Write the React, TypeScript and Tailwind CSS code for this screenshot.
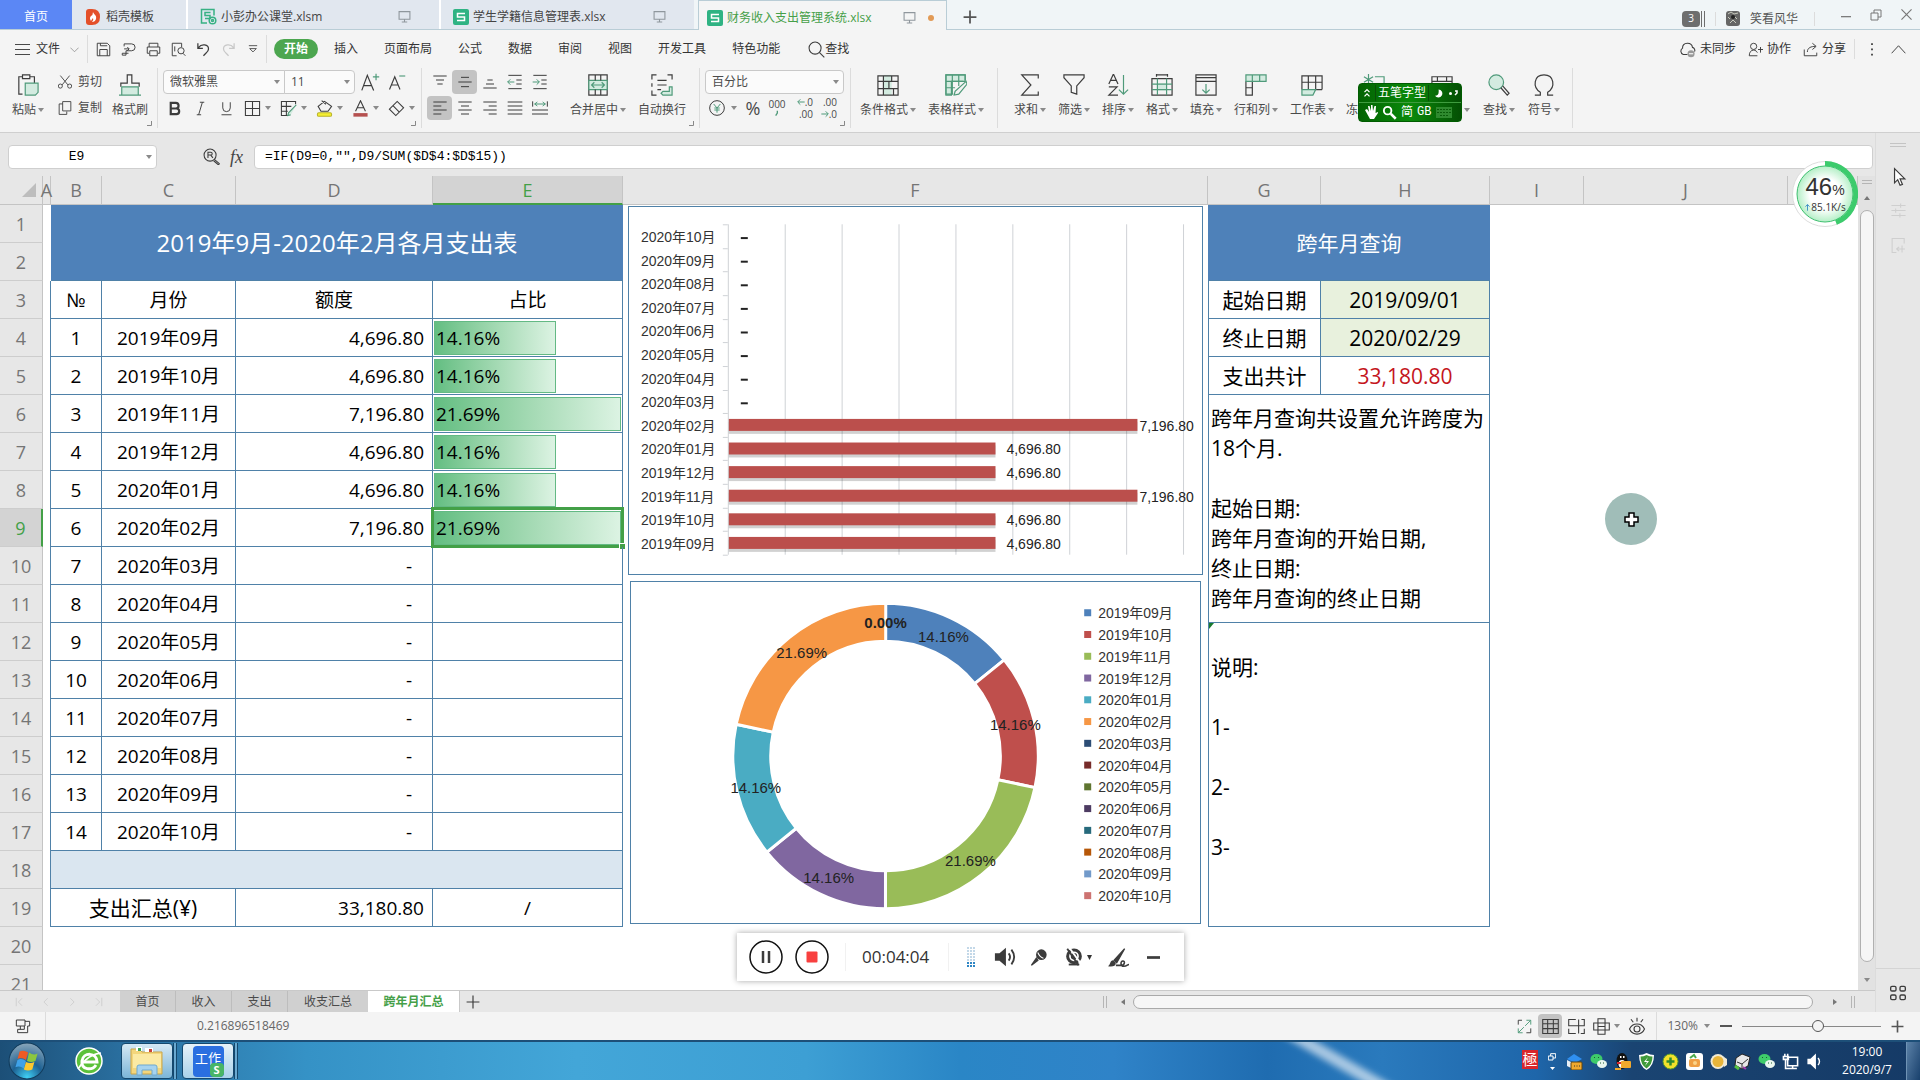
import type { ReactNode } from 'react';

const G = '#4f9a7a';
const K = '#3c3c3c';
const MINT = '#d3ebe0';

function Svg({ w = 16, box = 24, sw = 1.5, children, className = '' }: { w?: number; box?: number; sw?: number; children: ReactNode; className?: string }) {
    return (
        <svg width={w} height={w} viewBox={`0 0 ${box} ${box}`} fill="none" stroke={K} strokeWidth={sw} aria-hidden="true" className={`shrink-0 ${className}`}>
            {children}
        </svg>
    );
}

function Caret() {
    return (
        <svg width="6" height="4" viewBox="0 0 6 4" className="shrink-0" aria-hidden="true">
            <path d="M0 0h6L3 4z" fill="#8a8a8a" />
        </svg>
    );
}

function Sep({ className = '' }: { className?: string }) {
    return <span className={`w-px shrink-0 bg-[#dcdcdc] ${className}`} />;
}

function Monitor() {
    return (
        <Svg w={13} sw={2}>
            <path d="M2 3h20v14H2zM12 17v5M7 22h10" stroke="#8f979d" />
        </Svg>
    );
}

function SheetLogo({ plain = false }: { plain?: boolean }) {
    if (plain) {
        return (
            <svg width="17" height="17" viewBox="0 0 17 17" fill="none" stroke="#37b184" strokeWidth="1.5" className="shrink-0" aria-hidden="true">
                <path d="M7 15H1.5V1.500H14v6" />
                <path d="M10.500 4.500H5v3h5v3H5" />
                <circle cx="12.500" cy="12.500" r="3.300" />
                <circle cx="12.500" cy="12.500" r="1" />
            </svg>
        );
    }
    return (
        <svg width="16" height="16" viewBox="0 0 16 16" fill="none" className="shrink-0" aria-hidden="true">
            <rect width="16" height="16" rx="2" fill="#2fb383" />
            <path d="M12 4.500H4.500V8h7v3.500H4" stroke="#fff" strokeWidth="1.500" />
        </svg>
    );
}

function TitleBar() {
    return (
        <header className="flex h-[30px] shrink-0 items-stretch border-b border-[#b9cdd6] bg-[#f0f5f7] text-xs text-[#444]">
            <a href="#home" className="flex w-[72px] items-center justify-center bg-[#5b87f5] pt-1 text-white">首页</a>
            <a href="#docer" className="flex w-[116px] items-center gap-1.5 border-r-2 border-white bg-[#e1e7ef] pl-3.5 pt-1">
                <svg width="14" height="16" viewBox="0 0 14 16" aria-hidden="true">
                    <path d="M0 3Q0 0 3 0H6Q14 0 14 8T6 16H3Q0 16 0 13z" fill="#e4502a" />
                    <path d="M7 3c1 3 4 3 3 7q-1 3-4 3 2-2 1-4-1 1-2 3-2-3 0-5 2-1 2-4z" fill="#fff" />
                </svg>
                稻壳模板
            </a>
            <a href="#class" className="flex w-[253px] items-center gap-1 border-r-2 border-white bg-[#e1e7ef] pl-3 pt-1">
                <SheetLogo plain />
                <span className="flex-1">小彭办公课堂.xlsm</span>
                <span className="mr-7"><Monitor /></span>
            </a>
            <a href="#students" className="flex w-[253px] items-center gap-1 bg-[#e1e7ef] pl-3 pt-1">
                <SheetLogo />
                <span className="flex-1">学生学籍信息管理表.xlsx</span>
                <span className="mr-7"><Monitor /></span>
            </a>
            <a href="#finance" className="-mb-px ml-1 flex w-[249px] items-center gap-1 border-x border-t border-[#b9cdd6] bg-[#f4f5f5] pl-2 pt-1 text-[#46a049]">
                <SheetLogo />
                <span className="flex-1">财务收入支出管理系统.xlsx</span>
                <Monitor />
                <span className="ml-2 mr-3 size-1.5 rounded-full bg-[#e29a55]" />
            </a>
            <button aria-label="新建" className="w-[46px] pt-1">
                <Svg w={14} sw={3} className="mx-auto"><path d="M12 1v22M1 12h22" stroke="#555" /></Svg>
            </button>
            <div className="ml-auto flex items-center pt-2 text-[#555]">
                <span className="flex h-4 w-[18px] items-center justify-center rounded-sm bg-[#6e6e6e] text-[10px] text-white">3</span>
                <span className="ml-px h-4 w-1 border-x border-[#6e6e6e]" />
                <Sep className="mx-2.5 h-3.5" />
                <svg width="14" height="15" viewBox="0 0 14 15" aria-hidden="true">
                    <rect width="14" height="15" rx="3" fill="#666" />
                    <path d="M2 3l3-2 3 2 4-1M2 6l2 2M9 6l2 2M4 12l3-3 3 3" stroke="#c9cbbf" fill="none" />
                    <circle cx="7" cy="6" r="2" fill="#222" />
                </svg>
                <span className="ml-2.5">笑看风华</span>
                <Sep className="ml-4 h-3.5" />
                <div className="-mt-2 flex">
                    <button aria-label="最小化" className="flex h-5 w-9 items-center justify-end"><Svg w={10}><path d="M0 16h24" stroke="#777" strokeWidth="3" /></Svg></button>
                    <button aria-label="还原" className="flex h-5 w-[31px] items-center justify-end"><Svg w={12} sw={2}><path d="M2 8h14v14H2zM8 8V2h14v14h-6" stroke="#777" /></Svg></button>
                    <button aria-label="关闭" className="mr-2 flex h-5 w-[30px] items-center justify-end"><Svg w={11} sw={2.5}><path d="M1 1l22 22M23 1L1 23" stroke="#777" /></Svg></button>
                </div>
            </div>
        </header>
    );
}

const menus = ['插入', '页面布局', '公式', '数据', '审阅', '视图', '开发工具', '特色功能'];

const quick: { label: string; art: ReactNode }[] = [
    { label: '保存', art: <path d="M2 2h16l4 4v16H2zM6 22v-10h12v10M7 2v4h11" /> },
    { label: '输出', art: <path d="M5 7V3h12a5 5 0 010 11H8v7H2v-3h10M5 11h8M10 8l3 3-3 3" /> },
    { label: '打印', art: <path d="M5 8V2h14v6M5 18H2V8h20v10h-3M6 14h12v8H6z" /> },
    { label: '预览', art: <path d="M9 22H2V2h15v6M16 19a5 5 0 100-10 5 5 0 000 10zM19 18l4 4M6 7v8" /> },
];

function MenuBar() {
    return (
        <nav className="flex h-9 shrink-0 items-center bg-[#f4f4f4] pl-[15px] pt-0.5 text-xs text-[#333]">
            <button className="flex items-center gap-1.5">
                <Svg w={15}><path d="M0 4h24M0 12h24M0 20h24" /></Svg>
                文件
                <Svg w={9} className="ml-1" sw={2}><path d="M1 7l11 11L23 7" stroke="#888" /></Svg>
            </button>
            <Sep className="mx-2 h-7" />
            <div className="flex items-center gap-2.5">
                {quick.map((q) => (
                    <button key={q.label} aria-label={q.label}><Svg w={15}>{q.art}</Svg></button>
                ))}
                <button aria-label="撤销"><Svg w={15} sw={2}><path d="M3 2v8h8M4 9c5-7 16-5 16 2 0 5-5 7-8 11" /></Svg></button>
                <button aria-label="恢复"><Svg w={15} sw={2}><path d="M21 2v8h-8M20 9C15 2 4 4 4 11c0 5 5 7 8 11" stroke="#c8c8c8" /></Svg></button>
                <button aria-label="更多" className="ml-0.5"><Svg w={10} sw={2}><path d="M2 4h20M4 11h16l-8 8z" /></Svg></button>
            </div>
            <Sep className="ml-2 h-7" />
            <button className="ml-[7px] h-5 w-11 rounded-full bg-[#4ca64f] font-bold leading-5 text-white">开始</button>
            <div className="ml-4 flex gap-[26px]">
                {menus.map((m) => <button key={m}>{m}</button>)}
            </div>
            <button className="ml-7 flex items-center">
                <Svg w={17}><circle cx="10" cy="10" r="8.500" /><path d="M16 16l7 7" /></Svg>
                查找
            </button>
            <div className="ml-auto flex items-center gap-3 pr-3.5">
                <button className="flex items-center gap-1">
                    <Svg w={17}><path d="M12 19H6a5 5 0 01-1-9c0-9 13-9 14-1 3 1 4 4 3 6" /><circle cx="17" cy="18" r="5" fill="#999" stroke="none" /><path d="M14 18h6" stroke="#fff" /></Svg>
                    未同步
                </button>
                <button className="flex items-center gap-1">
                    <Svg w={15}><circle cx="9" cy="7" r="5" /><path d="M2 22c0-6 3-9 7-9 3 0 5 2 6 4M2 22h13M20 8v9M16 12h8" /></Svg>
                    协作
                </button>
                <button className="flex items-center gap-1">
                    <Svg w={15}><path d="M2 12v10h20v-5M7 16c0-7 6-9 13-9M15 2l6 5-6 5" /></Svg>
                    分享
                </button>
                <Sep className="-ml-1 h-5" />
                <button aria-label="选项" className="w-2"><Svg w={14} className="-ml-0.5"><path d="M12 2v3M12 11v3M12 20v3" strokeWidth="3" /></Svg></button>
                <button aria-label="折叠功能区" className="ml-1"><Svg w={15}><path d="M1 18L12 6l11 12" /></Svg></button>
            </div>
        </nav>
    );
}

function Big({ label, width = 'w-11', caret = true, children }: { label: string; width?: string; caret?: boolean; children: ReactNode }) {
    return (
        <button className={`flex shrink-0 flex-col items-center gap-1.5 pt-2 ${width}`}>
            <Svg w={22} sw={1.3}>{children}</Svg>
            <span className="flex items-center gap-0.5 whitespace-nowrap leading-4">{label}{caret && <Caret />}</span>
        </button>
    );
}

function Corner() {
    return <svg width="5" height="5" viewBox="0 0 5 5" className="absolute bottom-1.5 right-[5px]" aria-hidden="true"><path d="M4.500 0v4.500H0" fill="none" stroke="#888" /></svg>;
}

function Tool({ label, on = false, children }: { label: string; on?: boolean; children: ReactNode }) {
    return (
        <button aria-label={label} className={`flex h-6 w-[25px] items-center justify-center rounded ${on ? 'bg-[#c3c3c3]' : ''}`}>
            <Svg w={16}>{children}</Svg>
        </button>
    );
}

function DropTool({ label, children }: { label: string; children: ReactNode }) {
    return (
        <button aria-label={label} className="flex h-6 w-9 items-center justify-center gap-1">
            <Svg w={17}>{children}</Svg>
            <Caret />
        </button>
    );
}

function Pick({ label, value, className }: { label: string; value: string; className: string }) {
    return (
        <label className={`relative flex h-6 items-center border border-[#c9c9c9] bg-[#fbfbfb] ${className}`}>
            <select aria-label={label} className="h-full w-full appearance-none pl-1.5 text-xs outline-none">
                <option>{value}</option>
            </select>
            <span className="pointer-events-none absolute inset-y-0 right-1 flex items-center"><Caret /></span>
        </label>
    );
}

function Ribbon() {
    return (
        <section className="flex h-[67px] shrink-0 overflow-hidden border-b border-[#cfcfcf] bg-[#f4f4f4] text-xs text-[#4a4a4a]">
            <div className="relative flex w-[157px] shrink-0 pl-1.5">
                <Big label="粘贴">
                    <path d="M6 22H2V3h4M14 3h5v7M6 1h8v4H6z" />
                    <path d="M9 10h14v10l-3 3H9z" fill={MINT} stroke={G} />
                </Big>
                <div className="ml-2 flex shrink-0 flex-col gap-0.5 whitespace-nowrap pt-1">
                    <button className="flex h-6 items-center gap-1.5">
                        <Svg w={14}><path d="M4 1l13 16M20 1L7 17" /><circle cx="4" cy="19" r="3.500" /><circle cx="20" cy="19" r="3.500" /></Svg>剪切
                    </button>
                    <button className="flex h-6 items-center gap-1.5">
                        <Svg w={14}><path d="M8 1h14v16H8zM8 5H2v18h13v-5" /></Svg>复制
                    </button>
                </div>
                <Big label="格式刷" width="w-14" caret={false}>
                    <path d="M2 14v-4h7V1h5v9h8v4" />
                    <path d="M3 14h18v9H3zM0 23h24" fill={MINT} stroke={G} />
                </Big>
                <Corner />
            </div>
            <Sep className="mb-1 mt-0.5" />
            <div className="relative flex w-[263px] shrink-0 flex-col gap-0.5 pl-[3px] pt-1">
                <div className="flex items-center pl-0.5">
                    <Pick label="字体" value="微软雅黑" className="w-[122px] rounded-l" />
                    <Pick label="字号" value="11" className="-ml-px w-[71px] rounded-r" />
                    <button aria-label="增大字号" className="ml-1.5"><Svg w={19}><path d="M1 22L8 3l8 19M3 16h10" /><path d="M19 1v8M15 5h8" stroke={G} /></Svg></button>
                    <button aria-label="减小字号" className="ml-2"><Svg w={18}><path d="M2 22L9 5l7 17M4 16h9" /><path d="M15 4h8" stroke={G} /></Svg></button>
                </div>
                <div className="flex items-center">
                    <button aria-label="加粗" className="h-6 w-[26px]"><Svg w={15} className="mx-auto" sw={3.5}><path d="M6 3h8a4 4 0 010 9H6zM6 12h9a4 4 0 010 9H6z" /></Svg></button>
                    <button aria-label="倾斜" className="h-6 w-[26px]"><Svg w={15} className="mx-auto"><path d="M11 2h7M6 22h7M15 2L9 22" /></Svg></button>
                    <button aria-label="下划线" className="h-6 w-[26px]"><Svg w={15} className="mx-auto"><path d="M6 2v9a6 6 0 0012 0V2M4 22h16" /></Svg></button>
                    <DropTool label="边框"><path d="M2 2h20v20H2zM12 2v20M2 12h20" /></DropTool>
                    <DropTool label="绘图边框"><path d="M22 6V2H2v20h10M2 9h14M2 16h9M9 2v20" /><path d="M23 7L12 18l-1 4 4-1" fill={MINT} stroke={G} /></DropTool>
                    <DropTool label="填充颜色"><path d="M12 2L3 9l4 7h10l5-7zM8 1l6 5" /><rect x="2" y="18" width="20" height="5" rx="2" fill="#f5ee31" stroke="#b9b32e" /></DropTool>
                    <DropTool label="字体颜色"><path d="M5 16L12 1l7 15M8 11h8" /><path d="M2 21h20" stroke="#b5504f" strokeWidth="5" /></DropTool>
                    <DropTool label="清除"><path d="M2 13L13 2l9 9-11 11zM7 8l9 9" /></DropTool>
                </div>
                <Corner />
            </div>
            <Sep className="mb-1 mt-0.5" />
            <div className="relative flex w-[277px] shrink-0 pl-[5px]">
                <div className="flex flex-col gap-0.5 pt-1">
                    <div className="flex">
                        <Tool label="顶端对齐"><path d="M2 3h20M6 9h12M8 15h8" /></Tool>
                        <Tool label="垂直居中" on><path d="M6 5h12M2 12h20M6 19h12" /></Tool>
                        <Tool label="底端对齐"><path d="M8 9h8M6 15h12M2 21h20" /></Tool>
                        <Tool label="减少缩进"><path d="M2 2h20M14 9h8M14 15h8M2 22h20" /><path d="M11 12H1M5 8l-4 4 4 4" stroke={G} /></Tool>
                        <Tool label="增加缩进"><path d="M2 2h20M14 9h8M14 15h8M2 22h20" /><path d="M1 12h10M7 8l4 4-4 4" stroke={G} /></Tool>
                    </div>
                    <div className="flex">
                        <Tool label="左对齐" on><path d="M2 3h20M2 9h12M2 15h20M2 21h12" /></Tool>
                        <Tool label="居中"><path d="M2 3h20M6 9h12M2 15h20M6 21h12" /></Tool>
                        <Tool label="右对齐"><path d="M2 3h20M10 9h12M2 15h20M10 21h12" /></Tool>
                        <Tool label="两端对齐"><path d="M1 3h22M1 9h22M1 15h22M1 21h22" /></Tool>
                        <Tool label="分散对齐"><path d="M1 2v8M23 2v8M0 15h24M0 21h24" /><path d="M4 6h16M8 3L4 6l4 3M16 3l4 3-4 3" stroke={G} /></Tool>
                    </div>
                </div>
                <span className="w-3" />
                <Big label="合并居中" width="w-[68px]">
                    <path d="M2 1h20v22H2z" />
                    <path d="M2 7h20v10H2z" fill={MINT} stroke={G} />
                    <path d="M9 1v6M15 1v6M9 17v6M15 17v6" />
                    <path d="M5 12h14M8 9l-3 3 3 3M16 9l3 3-3 3" stroke={G} />
                </Big>
                <Big label="自动换行" width="w-[60px]" caret={false}>
                    <path d="M6 1H1v5M18 1h5v5M1 18v5h5M1 10v4M7 7h10M7 12h10M7 17h4" />
                    <path d="M20 14v5h-7l-2 2 2 2h10v-9z" fill={MINT} stroke={G} />
                </Big>
                <Corner />
            </div>
            <Sep className="mb-1 mt-0.5" />
            <div className="relative flex w-[150px] shrink-0 flex-col gap-0.5 pl-[5px] pt-1">
                <Pick label="数字格式" value="百分比" className="w-[139px] rounded" />
                <div className="flex h-6 items-center">
                    <button aria-label="货币" className="ml-1 flex w-8 items-center gap-1.5"><Svg w={16}><circle cx="12" cy="12" r="11" /><path d="M7 6l5 6 5-6M12 12v7M8 12h8M8 15h8" stroke={G} /></Svg><Caret /></button>
                    <button className="w-6 text-lg leading-6">%</button>
                    <button className="flex w-6 flex-col items-center text-[10px] leading-3">000<Svg w={8}><path d="M13 2v7l-5 8" stroke={G} strokeWidth="4" /></Svg></button>
                    <button aria-label="增加小数位数" className="ml-0.5 flex w-6 flex-col items-end pr-0.5 text-[10px] leading-3"><span className="flex items-center"><Svg w={8} sw={3}><path d="M23 12H3M10 4l-8 8 8 8" stroke={G} /></Svg>.0</span><span>.00</span></button>
                    <button aria-label="减少小数位数" className="flex w-6 flex-col items-end pr-0.5 text-[10px] leading-3"><span>.00</span><span className="flex items-center"><Svg w={8} sw={3}><path d="M1 12h20M14 4l8 8-8 8" stroke={G} /></Svg>.0</span></button>
                </div>
                <Corner />
            </div>
            <Sep className="mb-1 mt-0.5" />
            <div className="flex w-[146px] shrink-0 pl-[3px]">
                <Big label="条件格式" width="w-[68px]">
                    <path d="M7 1h9v22H7z" fill={MINT} stroke="none" />
                    <path d="M1 2h22v21H1zM1 8h22M1 16h22M7 2v21M16 2v6M13 8v8M18 16v7" />
                </Big>
                <Big label="表格样式" width="w-[68px]">
                    <path d="M1 1h21v7H7v15H1z" fill={MINT} stroke={G} />
                    <path d="M22 7V1H1v21h8M1 8h19M1 15h10M8 1v21M15 1v12" stroke={G} />
                    <path d="M23 8L11 19l-1 4 5-1L24 11z" fill="#f4f4f4" stroke={G} />
                </Big>
            </div>
            <Sep className="mb-1 mt-0.5" />
            <div className="flex shrink-0 pl-2.5 pr-1.5">
                <Big label="求和"><path d="M21 5V1H3l10 11L3 23h18v-4" /></Big>
                <Big label="筛选"><path d="M1 1h22v3l-8 9v9l-6-2v-7L1 4z" /></Big>
                <Big label="排序"><path d="M2 11L7 0l5 11M4 7h6M2 14h9L2 23h10" /><path d="M18 1v21M13 17l5 5 5-5" stroke={G} /></Big>
                <Big label="格式"><path d="M7 10h10v8H7z" fill={MINT} stroke="none" /><path d="M6 1h12M6 0v3M18 0v3M1 5h22v18H1z" /><path d="M7 5v18M17 5v18M1 11h22M1 17h22" stroke={G} /></Big>
                <Big label="填充"><path d="M1 1h22v22H1zM1 4h22M1 8h22" /><path d="M12 11v10M8 17l4 4 4-4" stroke={G} /></Big>
                <Big label="行和列" width="w-14"><path d="M8 8v15H1V8M1 15h7" /><path d="M1 1h22v7H1zM8 1v7M16 1v7" fill={MINT} stroke={G} /></Big>
                <Big label="工作表" width="w-14"><path d="M23 17V2H1v15M1 9h22M8 2v15M16 2v15h7" /><path d="M1 17h15l-3 6H1z" fill={MINT} stroke={G} /></Big>
                <Big label="冻结窗格" width="w-[68px]"><path d="M6 0v12M1 3l10 6M11 3L1 9" stroke={G} /><path d="M13 3h10v19H2v-8M13 12h10" stroke={G} /></Big>
                <Big label="表格工具" width="w-[68px]"><path d="M1 3h22v19H1zM1 8h22M7 3v5M17 3v5" /></Big>
                <Big label="查找" width="w-[46px]"><circle cx="9" cy="9" r="8" fill={MINT} stroke={G} /><path d="M14 15l7 8 2-2-7-8" /></Big>
                <Big label="符号"><path d="M2 23h6v-3C-1 14 1 1 12 1s13 13 4 19v3h6" /></Big>
            </div>
            <Sep className="mb-1 mt-0.5" />
        </section>
    );
}

function ImeBar() {
    return (
        <div className="absolute left-[1358px] top-[83px] h-[39px] w-[104px] rounded border border-[#005c00] bg-gradient-to-r from-[#036303] via-[#0b8a0b] to-[#045004] text-xs text-white">
            <div className="flex h-[19px] items-center border-b border-[#3f9c3f]">
                <Svg w={10} className="mx-[3px]" sw={3}><path d="M6 10l6-6 6 6M6 20l6-6 6 6" stroke="#fff" /></Svg>
                <span className="border-x border-[#0a4f0a] px-0.5">五笔字型</span>
                <svg width="8" height="9" viewBox="0 0 9 9" className="ml-1.5" aria-hidden="true"><path d="M4 0a4.500 4.500 0 11-4 7q5 0 4-7z" fill="#fff" /></svg>
                <span className="ml-1.5 size-[3px] rounded-full bg-white" />
                <svg width="4" height="6" viewBox="0 0 4 6" className="ml-0.5" aria-hidden="true"><path d="M1 1h2v2L1 5" fill="none" stroke="#fff" strokeWidth="1.500" /></svg>
            </div>
            <div className="flex h-[18px] items-center gap-1 pl-1.5">
                <svg width="13" height="14" viewBox="0 0 13 14" fill="#fff" aria-hidden="true"><path d="M0 5l2-1 2 3L3 1h1.500L6 6V0h1.500l.5 6 1.500-5H11l-.5 7L13 7v1l-4 6H5z" /></svg>
                <Svg w={15} sw={3}><circle cx="9" cy="9" r="6" stroke="#fff" /><path d="M14 14l8 8" stroke="#fff" strokeWidth="4" /></Svg>
                <span>简</span>
                <span className="font-['Liberation_Mono',monospace] text-xs">GB</span>
                <svg width="16" height="11" viewBox="0 0 16 11" className="ml-px" aria-hidden="true"><rect width="16" height="11" fill="#2f8a2f" /><path d="M1 2.500h14M1 5.500h14M4 8.500h8" stroke="#0a5c0a" strokeDasharray="2 1" /></svg>
            </div>
        </div>
    );
}

function FormulaBar() {
    return (
        <div className="flex h-[43px] shrink-0 items-center bg-[#e7e7e7] pl-2 pr-0.5 pt-1 text-black">
            <label className="relative flex h-6 w-[149px] items-center rounded border border-[#cfcfcf] bg-white">
                <input aria-label="名称框" defaultValue="E9" className="w-full pr-3 text-center font-['Liberation_Mono',monospace] text-[13px] outline-none" />
                <span className="pointer-events-none absolute inset-y-0 right-1 flex items-center"><Caret /></span>
            </label>
            <Svg w={17} className="ml-[46px]"><circle cx="10" cy="10" r="8.500" /><path d="M16 16l7 6-1 2-7-6M7 14V6h4a2 2 0 010 4H7M11 10l3 4" /></Svg>
            <i className="ml-2.5 w-6 font-['Liberation_Serif',serif] text-lg text-[#444]">fx</i>
            <input aria-label="编辑栏" defaultValue={'=IF(D9=0,"",D9/SUM($D$4:$D$15))'} className="h-6 min-w-0 flex-1 rounded border border-[#cfcfcf] bg-white pl-2.5 font-['Liberation_Mono',monospace] text-[13px] outline-none" />
        </div>
    );
}

const months = [
    { month: '2019年09月', amount: 4696.8, share: 14.16, color: '#4e81bb' },
    { month: '2019年10月', amount: 4696.8, share: 14.16, color: '#bf4f4c' },
    { month: '2019年11月', amount: 7196.8, share: 21.69, color: '#99bc58' },
    { month: '2019年12月', amount: 4696.8, share: 14.16, color: '#8067a0' },
    { month: '2020年01月', amount: 4696.8, share: 14.16, color: '#4aacc3' },
    { month: '2020年02月', amount: 7196.8, share: 21.69, color: '#f69745' },
    { month: '2020年03月', amount: 0, share: 0, color: '#2c4d75' },
    { month: '2020年04月', amount: 0, share: 0, color: '#772c2a' },
    { month: '2020年05月', amount: 0, share: 0, color: '#5f7530' },
    { month: '2020年06月', amount: 0, share: 0, color: '#4d3b62' },
    { month: '2020年07月', amount: 0, share: 0, color: '#276a7c' },
    { month: '2020年08月', amount: 0, share: 0, color: '#b65708' },
    { month: '2020年09月', amount: 0, share: 0, color: '#729aca' },
    { month: '2020年10月', amount: 0, share: 0, color: '#cd7371' },
];

const money = (n: number) => n.toLocaleString('en-US', { minimumFractionDigits: 2 });

function BarChart() {
    const step = 331 / 14;
    return (
        <svg viewBox="0 0 574 367" className="block h-[367px] w-full" fontSize="14" fill="#333">
            <g stroke="#cfd2d6">
                {[0, 1, 2, 3, 4, 5, 6, 7, 8].map((i) => <path key={i} d={`M${99.5 + i * 57} 17v331`} />)}
                {Array.from({ length: 15 }, (_, i) => <path key={i} d={`M94 ${Math.round(17 + i * step) + 0.5}h5`} />)}
            </g>
            {[...months].reverse().map((m, i) => {
                const y = 17 + (i + 0.5) * step;
                const len = (m.amount / 8000) * 455;
                return (
                    <g key={m.month}>
                        <text x="12" y={y + 6}>{m.month}</text>
                        {m.amount > 0 ? (
                            <>
                                <rect x="100" y={y - 3} width={len} height="12" fill="#000" opacity="0.180" />
                                <rect x="100" y={y - 6} width={len} height="12" fill="#bb4f4c" />
                                <text x={100 + len + (m.amount > 7000 ? 2 : 11)} y={y + 6} fill="#222">{money(m.amount)}</text>
                            </>
                        ) : (
                            <path d={`M112 ${y + 2}h7`} stroke="#222" strokeWidth="2" />
                        )}
                    </g>
                );
            })}
        </svg>
    );
}

function point(r: number, t: number) {
    const a = t * Math.PI * 2;
    return `${(255 + r * Math.sin(a)).toFixed(2)} ${(174 - r * Math.cos(a)).toFixed(2)}`;
}

function RingChart() {
    let from = 0;
    const slices = months.filter((m) => m.share > 0).map((m) => {
        const start = from;
        from += m.share / 100;
        return { ...m, start, end: from };
    });
    const tags: [number, number][] = [[313, 55], [385, 143], [340, 279], [198, 296], [125, 206], [171, 71]];
    return (
        <svg viewBox="0 0 570 341" className="block h-[341px] w-full" fontSize="15" fill="#222">
            {slices.map((s) => (
                <path
                    key={s.month}
                    d={`M${point(153, s.start)}A153 153 0 0 1 ${point(153, s.end)}L${point(115, s.end)}A115 115 0 0 0 ${point(115, s.start)}Z`}
                    fill={s.color}
                    stroke="#fff"
                    strokeWidth="3"
                />
            ))}
            {slices.map((s, i) => (
                <text key={s.month} x={tags[i][0]} y={tags[i][1] + 5} textAnchor="middle">{s.share.toFixed(2)}%</text>
            ))}
            <text x="255" y="46" textAnchor="middle" fontWeight="bold">0.00%</text>
            <g fontSize="14" fill="#333">
                {months.map((m, i) => (
                    <g key={m.month}>
                        <rect x="454" y={27 + i * 21.8} width="7" height="7" fill={m.color} />
                        <text x="468" y={36 + i * 21.8}>{m.month}</text>
                    </g>
                ))}
            </g>
        </svg>
    );
}

const LINE = 'border-[#4f81a8]';

function MonthCells({ i }: { i: number }) {
    const m = months[i];
    return (
        <>
            <td className={`border-b border-r text-center ${LINE}`}>{i + 1}</td>
            <td className={`border-b border-r text-center ${LINE}`}>{m.month}</td>
            <td className={`border-b border-r text-right ${LINE} ${m.amount ? 'pr-2' : 'pr-5'}`}>{m.amount ? money(m.amount) : '-'}</td>
            <td className={`relative border-b border-r p-px ${LINE}`}>
                {m.share > 0 && (
                    <div
                        className="flex h-[34px] items-center whitespace-nowrap border border-[#63b984] bg-gradient-to-r from-[#63be82] to-[#dcf3e3] pl-px"
                        style={{ width: `${(m.share / 21.69) * 100}%` }}
                    >
                        {m.share.toFixed(2)}%
                    </div>
                )}
                {i === 5 && (
                    <span className="absolute -bottom-0.5 -left-0.5 -right-0.5 -top-0.5 border-[3px] border-[#43a047]">
                        <span className="absolute -bottom-1 -right-1 size-1.5 border-l border-t border-white bg-[#43a047]" />
                    </span>
                )}
            </td>
        </>
    );
}

function LeftCells({ row }: { row: number }) {
    if (row === 1) return <td colSpan={4} rowSpan={2} className={`border-b bg-[#4e81b9] text-center text-2xl text-white ${LINE}`}>2019年9月-2020年2月各月支出表</td>;
    if (row === 2) return null;
    if (row === 3) {
        return <>{['№', '月份', '额度', '占比'].map((t) => <td key={t} className={`border-b border-r text-center ${LINE}`}>{t}</td>)}</>;
    }
    if (row <= 17) return <MonthCells i={row - 4} />;
    if (row === 18) return <td colSpan={4} className={`border-b border-r bg-[#dae6f0] ${LINE}`} />;
    if (row === 19) {
        return (
            <>
                <td colSpan={2} className={`border-b border-r text-center text-[21px] ${LINE}`}>支出汇总(¥)</td>
                <td className={`border-b border-r pr-2 text-right ${LINE}`}>33,180.80</td>
                <td className={`border-b border-r text-center ${LINE}`}>/</td>
            </>
        );
    }
    return <td colSpan={4} />;
}

function RightCells({ row }: { row: number }) {
    if (row === 1) return <td colSpan={2} rowSpan={2} className={`border-b bg-[#4e81b9] text-center text-[21px] text-white ${LINE}`}>跨年月查询</td>;
    const facts = [['起始日期', '2019/09/01'], ['终止日期', '2020/02/29'], ['支出共计', '33,180.80']];
    if (row >= 3 && row <= 5) {
        const [name, value] = facts[row - 3];
        return (
            <>
                <td className={`border-x border-b text-center text-[21px] ${LINE}`}>{name}</td>
                <td className={`border-b border-r text-center text-[21px] ${LINE} ${row === 5 ? 'text-[#c4151c]' : 'bg-[#e8f1dd]'}`}>{value}</td>
            </>
        );
    }
    if (row === 6) {
        return (
            <td colSpan={2} rowSpan={6} className={`border-x border-b pb-0.5 pl-0.5 text-[21px] leading-[30px] ${LINE}`}>
                <p>跨年月查询共设置允许跨度为18个月.</p>
                <p className="mt-[30px]">起始日期:</p>
                <p>跨年月查询的开始日期,</p>
                <p>终止日期:</p>
                <p>跨年月查询的终止日期</p>
            </td>
        );
    }
    if (row === 12) {
        return (
            <td colSpan={2} rowSpan={8} className={`relative border-x border-b pb-9 pl-0.5 text-[21px] leading-[30px] ${LINE}`}>
                <svg width="5" height="6" viewBox="0 0 5 6" className="absolute left-0 top-0" aria-hidden="true"><path d="M0 0h5L0 6z" fill="#1a7a2e" /></svg>
                <div className="flex flex-col gap-[30px]">
                    <p>说明:</p>
                    <p>1-</p>
                    <p>2-</p>
                    <p>3-</p>
                </div>
            </td>
        );
    }
    return null;
}

function Sheet() {
    const rows = Array.from({ length: 21 }, (_, i) => i + 1);
    const cols = ['A', 'B', 'C', 'D', 'E', 'F', 'G', 'H', 'I', 'J', ''];
    return (
        <div className="min-h-0 min-w-0 flex-1 overflow-hidden bg-white">
            <table className="w-full table-fixed border-separate border-spacing-0 text-[19px] leading-6 text-black">
                <colgroup>
                    <col className="w-[43px]" /><col className="w-[8px]" /><col className="w-[51px]" /><col className="w-[134px]" />
                    <col className="w-[197px]" /><col className="w-[190px]" /><col className="w-[585px]" /><col className="w-[113px]" />
                    <col className="w-[169px]" /><col className="w-[94px]" /><col className="w-[204px]" /><col />
                </colgroup>
                <thead>
                    <tr className="h-[29px] bg-[#e7e7e7] text-[18px] text-[#757575]">
                        <th className="border-b border-r border-[#c4c4c4]">
                            <svg width="14" height="14" viewBox="0 0 14 14" className="ml-auto mr-1.5" aria-hidden="true"><path d="M14 0v14H0z" fill="#bdbdbd" /></svg>
                        </th>
                        {cols.map((c, i) => (
                            <th key={i} className={`border-r font-normal ${c === 'E' ? 'border-b-2 border-b-[#43a047] border-r-[#c4c4c4] bg-[#d3d3d3] text-[#43a047]' : 'border-b border-[#c4c4c4]'}`}>
                                <span className="flex justify-center">{c}</span>
                            </th>
                        ))}
                    </tr>
                </thead>
                <tbody>
                    {rows.map((r) => (
                        <tr key={r} className="h-[38px]">
                            <th className={`border-b border-b-[#cdcdcd] p-0 text-[18px] font-normal ${r === 9 ? 'border-r-2 border-r-[#43a047] bg-[#d3d3d3] text-[#43a047]' : 'border-r border-r-[#c4c4c4] bg-[#e7e7e7] text-[#757575]'}`}>{r}</th>
                            <td className={r >= 3 && r <= 19 ? `border-r ${LINE}` : ''} />
                            <LeftCells row={r} />
                            {r === 1 && (
                                <td rowSpan={21} className="px-[5px] pt-px align-top font-['Liberation_Sans','Noto_Sans_CJK_SC',sans-serif]">
                                    <div className={`border ${LINE}`}><BarChart /></div>
                                    <div className={`mx-0.5 mt-1.5 border ${LINE}`}><RingChart /></div>
                                </td>
                            )}
                            {r <= 19 ? <RightCells row={r} /> : <td colSpan={2} />}
                            {r === 1 && <td colSpan={3} rowSpan={21} />}
                        </tr>
                    ))}
                </tbody>
            </table>
        </div>
    );
}

function VerticalScroll() {
    return (
        <div className="flex w-[17px] shrink-0 flex-col items-center bg-[#e2e2e2]">
            <span className="mt-1 h-1 w-2.5 border-y border-[#b5b5b5]" />
            <svg width="6" height="4" viewBox="0 0 6 4" className="mb-2.5 mt-3" aria-hidden="true"><path d="M0 4h6L3 0z" fill="#777" /></svg>
            <span className="w-3.5 flex-1 rounded-full border border-[#b0b0b0] bg-[#f6f6f6]" />
            <span className="mb-2 mt-4"><Caret /></span>
        </div>
    );
}

function SheetTabs() {
    return (
        <div className="flex h-[22px] shrink-0 items-stretch border-t border-[#c9c9c9] bg-[#e7e7e7] text-xs text-[#4a4a4a]">
            <div className="flex w-[120px] items-center gap-4 pl-[15px]">
                {['M3 2v20M17 3L8 12l9 9', 'M16 3l-9 9 9 9', 'M8 3l9 9-9 9', 'M21 2v20M7 3l9 9-9 9'].map((d) => (
                    <button key={d} aria-label="切换工作表"><Svg w={10}><path d={d} stroke="#c4c4c4" /></Svg></button>
                ))}
            </div>
            {['首页', '收入', '支出'].map((t) => (
                <button key={t} className="w-14 border-r border-[#bdbdbd] bg-[#d0d0d0]">{t}</button>
            ))}
            <button className="w-20 bg-[#d0d0d0]">收支汇总</button>
            <button className="w-[92px] border-r border-[#c9c9c9] bg-white font-bold text-[#46a049]">跨年月汇总</button>
            <button aria-label="新建工作表" className="ml-1.5"><Svg w={14} sw={2}><path d="M12 1v22M1 12h22" /></Svg></button>
            <div className="ml-auto flex w-[42%] max-w-[772px] items-center pr-5">
                <span className="h-3 w-1 border-x border-[#b5b5b5]" />
                <svg width="4" height="6" viewBox="0 0 4 6" className="ml-3.5 mr-2" aria-hidden="true"><path d="M4 0v6L0 3z" fill="#777" /></svg>
                <span className="h-3.5 flex-1 rounded-full border border-[#a9a9a9] bg-[#f6f6f6]" />
                <svg width="4" height="6" viewBox="0 0 4 6" className="ml-5 mr-3.5" aria-hidden="true"><path d="M0 0v6l4-3z" fill="#777" /></svg>
                <span className="h-3 w-1 border-x border-[#b5b5b5]" />
            </div>
        </div>
    );
}

function SideBar() {
    return (
        <aside className="flex w-[45px] shrink-0 flex-col items-center border-l border-[#dcdcdc] bg-[#e7e7e7] pt-2.5">
            <span className="h-1 w-4 border-y border-[#c4c4c4]" />
            <Svg w={19} className="mt-5"><path d="M7 2v18l4-4 3 7 3-1-3-7h6z" fill="#fff" /></Svg>
            <Svg w={17} className="mt-4"><path d="M2 5h20M2 12h20M2 19h20M15 2v6M8 9v6M14 16v6" stroke="#cfcfcf" /></Svg>
            <Svg w={17} className="mt-[18px]"><path d="M20 9V2H3v20h6M9 17h12M17 12v10M9 17l4-3M9 17l4 3" stroke="#cfcfcf" /></Svg>
            <div className="mt-auto flex h-11 w-full justify-center border-t border-[#d4d4d4] pt-4">
                <Svg w={16} sw={2}><rect x="1" y="2" width="8" height="7" rx="2" /><rect x="15" y="2" width="8" height="7" rx="2" /><rect x="1" y="15" width="8" height="7" rx="2" /><rect x="15" y="15" width="8" height="7" rx="2" /></Svg>
            </div>
        </aside>
    );
}

function StatusBar() {
    return (
        <footer className="flex h-7 shrink-0 items-center bg-[#f4f4f4] text-xs text-[#666]">
            <Svg w={16} className="ml-[15px]"><path d="M2 3h13v9H2zM15 5h7v7h-3v10H4v-5h10v-5M8 12v5" /></Svg>
            <Sep className="ml-3.5 h-7" />
            <span className="ml-[151px]">0.216896518469</span>
            <div className="ml-auto flex items-center pr-4">
                <button aria-label="全屏"><Svg w={15}><path d="M2 9V2h6M22 15v7h-7" /><path d="M13 11l9-9M15 2h7v7M11 13l-9 9M2 15v7h7" stroke={G} /></Svg></button>
                <button aria-label="普通视图" className="ml-1.5 flex h-6 w-6 items-center justify-center rounded bg-[#c3c3c3]"><Svg w={17}><path d="M1 2h22v20H1zM1 8h22M1 15h22M8 2v20M16 2v20" /></Svg></button>
                <button aria-label="分页预览" className="ml-1.5"><Svg w={17}><path d="M11 2H1v9h22V2h-4M15 2v20M1 15v7h10M18 22h5v-7" /></Svg></button>
                <button aria-label="阅读模式" className="ml-2 flex items-center gap-1"><Svg w={17}><path d="M7 1h10v22H7zM1 7h22v10H1zM7 12h10" /></Svg><Caret /></button>
                <button aria-label="护眼模式" className="ml-2"><Svg w={18}><path d="M2 16c4-9 16-9 20 0-4 9-16 9-20 0zM12 1v5M4 3l3 4M20 3l-3 4" /><circle cx="12" cy="16" r="4" /></Svg></button>
                <Sep className="mx-2.5 h-7" />
                <button className="flex items-center gap-1.5">130%<Caret /></button>
                <button aria-label="缩小" className="ml-2.5"><Svg w={12} sw={4}><path d="M0 12h24" stroke="#555" /></Svg></button>
                <input
                    type="range"
                    aria-label="缩放比例"
                    min="0"
                    max="100"
                    defaultValue="55"
                    className="mx-2.5 h-4 w-[139px] appearance-none bg-transparent [&::-webkit-slider-runnable-track]:h-px [&::-webkit-slider-runnable-track]:bg-[#888] [&::-webkit-slider-thumb]:-mt-1.5 [&::-webkit-slider-thumb]:size-3 [&::-webkit-slider-thumb]:appearance-none [&::-webkit-slider-thumb]:rounded-full [&::-webkit-slider-thumb]:border [&::-webkit-slider-thumb]:border-[#555] [&::-webkit-slider-thumb]:bg-[#f4f4f4]"
                />
                <button aria-label="放大"><Svg w={13} sw={3}><path d="M12 1v22M1 12h22" stroke="#555" /></Svg></button>
            </div>
        </footer>
    );
}

function WeChat() {
    return (
        <svg width="17" height="16" viewBox="0 0 17 16" aria-hidden="true">
            <ellipse cx="6.500" cy="6" rx="6" ry="5" fill="#3ecb6a" />
            <ellipse cx="12" cy="11" rx="5" ry="4" fill="#e9f6ee" />
            <path d="M4 4.500h1M8 4.500h1M10 10h1M13 10h1" stroke="#1b5a33" />
        </svg>
    );
}

function TaskBar() {
    return (
        <div className="relative flex h-10 shrink-0 items-center overflow-hidden border-t-2 border-[#1d4f78] bg-[linear-gradient(90deg,#1c4f77_0%,#2b72a3_7%,#3592c6_16%,#43a6d8_30%,#3d9fd4_42%,#2a86c6_50%,#2f83c8_58%,#1f6cb0_66%,#2a7abd_72%,#1e66aa_80%,#1a4472_85%,#153a66_100%)]">
            <span className="absolute left-[1334px] top-[-50px] h-[140px] w-3 -rotate-[60deg] bg-white/60 blur-[3px]" />
            <button aria-label="开始" className="ml-2">
                <svg width="38" height="38" viewBox="0 0 36 36" aria-hidden="true">
                    <defs>
                        <radialGradient id="orb" cx="50%" cy="95%" r="95%"><stop offset="0" stopColor="#3fd0f5" /><stop offset=".45" stopColor="#1d6193" /><stop offset="1" stopColor="#8aa6ba" /></radialGradient>
                    </defs>
                    <circle cx="18" cy="18" r="17" fill="url(#orb)" stroke="#123c5c" />
                    <path d="M11 9q4-2 8 1l-2 7q-4-3-8-1z" fill="#ee5a24" />
                    <path d="M20 10q4 3 8 1l-2 7q-4 2-8 0z" fill="#8cc63e" />
                    <path d="M9 17q4-2 8 1l-2 7q-4-3-8-1z" fill="#3fa2e8" />
                    <path d="M17 19q4 2 8 0l-2 7q-4 2-8 0z" fill="#fcc82e" />
                </svg>
            </button>
            <button aria-label="浏览器" className="ml-[29px]">
                <svg width="28" height="28" viewBox="0 0 28 28" aria-hidden="true">
                    <circle cx="14" cy="14" r="13" fill="#5cc13a" stroke="#fff" strokeWidth="1.500" />
                    <path d="M7 15h15c0-10-14-10-15-1s10 10 14 4" fill="none" stroke="#fff" strokeWidth="3" />
                    <path d="M3 22C8 14 16 7 26 6" fill="none" stroke="#fff" strokeWidth="1.500" />
                </svg>
            </button>
            <button aria-label="资源管理器" className="ml-[18px] flex h-9 w-[52px] items-center justify-center rounded-sm border border-[#14486e] bg-gradient-to-b from-[#d5e8f4] to-[#7bb5d8]">
                <svg width="34" height="30" viewBox="0 0 34 30" aria-hidden="true">
                    <path d="M1 3h9l2 3h20v22H1z" fill="#f3d67c" stroke="#c9a548" />
                    <path d="M3 8h28v14H3z" fill="#fbeaa4" />
                    <path d="M6 1h6v4H6zM15 2h8v4h-8z" fill="#fff" /><path d="M8 2h3v3H8z" fill="#3aa155" /><path d="M19 3h3v3h-3z" fill="#c9453a" />
                    <path d="M7 29v-8q0-2 2-2h16q2 0 2 2v8h-5v-5H12v5z" fill="#a6d3ef" stroke="#6fa9cf" />
                </svg>
            </button>
            <span className="h-9 w-1 border-x border-[#14486e] bg-[#6aa9d0]" />
            <button aria-label="工作表格" className="ml-[5px] flex h-9 w-[52px] items-center justify-center rounded-sm border border-[#14486e] bg-gradient-to-b from-[#e7f2f9] to-[#a9d2ea]">
                <span className="relative flex h-[31px] w-[31px] justify-center overflow-hidden rounded bg-[#2a6fe0] pt-1 text-[13px] leading-4 text-white">
                    工作
                    <span className="absolute bottom-0 right-0 flex h-3.5 w-3.5 items-center justify-center rounded-sm bg-[#48b566] text-[11px] font-bold leading-none">S</span>
                </span>
            </button>
            <span className="h-9 w-1 border-x border-[#14486e] bg-[#6aa9d0]" />
            <div className="ml-auto flex items-center text-white">
                <span className="-mt-1 flex h-[19px] w-4 items-center justify-center bg-[#d8262c] text-[15px] leading-none">極</span>
                <span className="ml-2.5 flex flex-col items-center gap-1.5">
                    <Svg w={8} sw={3}><path d="M1 9h14v12H1zM8 9V2h15v13h-8" stroke="#fff" /></Svg>
                    <svg width="5" height="3" viewBox="0 0 5 3" aria-hidden="true"><path d="M0 0h5L2.500 3z" fill="#fff" /></svg>
                </span>
                <div className="ml-2.5 flex items-center gap-[7px]">
                    <svg width="17" height="17" viewBox="0 0 17 17" aria-hidden="true"><path d="M1 6l7-5 8 5-7 4z" fill="#2f8ff0" /><path d="M1 7l8 4v6L1 13z" fill="#e8eef4" /><rect x="5" y="9" width="11" height="8" rx="1" fill="#f0a92e" stroke="#5e4510" /><path d="M8 13h1M10.500 13h1M13 13h1" stroke="#333" /></svg>
                    <WeChat />
                    <svg width="17" height="17" viewBox="0 0 17 17" aria-hidden="true"><ellipse cx="8" cy="8" rx="5.500" ry="8" fill="#111" /><ellipse cx="8" cy="11" rx="3.500" ry="4" fill="#fff" /><path d="M3 9h10v2H3z" fill="#d8262c" /><path d="M6 4h1.500M9 4h1.500" stroke="#fff" strokeWidth="2" /><rect x="7" y="8" width="10" height="7" rx="1" fill="#f0a92e" /><path d="M1 16h6" stroke="#f0a92e" strokeWidth="2" /></svg>
                    <svg width="17" height="17" viewBox="0 0 17 17" aria-hidden="true"><path d="M8.500 0q4 2 7.500 2 0 11-7.500 15Q1 13 1 2q4 0 7.500-2z" fill="#fff" /><path d="M8.500 2q3 1.500 6 1.500 0 8-6 12-6-4-6-12 3 0 6-1.500z" fill="#3f9a3a" /><path d="M10 4L6 9h3l-2 4 4-5H8z" fill="#fff" /></svg>
                    <svg width="17" height="17" viewBox="0 0 17 17" aria-hidden="true"><circle cx="8.500" cy="8.500" r="7.500" fill="#f2e02b" stroke="#5aa02c" /><path d="M8.500 4.500v8M4.500 8.500h8" stroke="#2f8a2f" strokeWidth="2.500" /></svg>
                    <svg width="17" height="17" viewBox="0 0 17 17" aria-hidden="true"><rect width="17" height="17" rx="3" fill="#fff" /><rect x="3" y="6" width="11" height="8" rx="2" fill="#f0a044" /><path d="M4 5l4-3 2 3" stroke="#4bab4e" fill="none" strokeWidth="2" /><circle cx="9" cy="10" r="2" fill="#fbd48a" /></svg>
                    <svg width="17" height="17" viewBox="0 0 17 17" aria-hidden="true"><circle cx="8" cy="8.500" r="7.500" fill="#f1ead4" /><circle cx="8" cy="8.500" r="5.500" fill="#e8b53a" /><path d="M14 4l3 2v6l-3 2z" fill="#f1ead4" /></svg>
                    <svg width="17" height="17" viewBox="0 0 17 17" aria-hidden="true"><path d="M2 5l6-4 8 3-2 9-6 3-7-4z" fill="#e8e8e8" stroke="#222" /><path d="M3 9l5 2 6-5M8 11v4" stroke="#333" fill="none" /><path d="M1 13l4 3" stroke="#56c142" strokeWidth="3" /><path d="M9 14l3 2" stroke="#a33bb0" strokeWidth="2" /></svg>
                    <WeChat />
                    <Svg w={17} sw={2.2}><path d="M8 6h14v12H8zM15 18v4M9 22h12M4 1v4M8 1v4M2 5h7v4H2zM5 9v13h4" stroke="#fff" /></Svg>
                    <Svg w={17} sw={2}><path d="M3 9h4l6-6v18l-6-6H3z" fill="#fff" stroke="#fff" /><path d="M17 7q4 5 0 10" stroke="#fff" /></Svg>
                </div>
                <time className="ml-3 w-16 text-center text-xs leading-[18px]">19:00<br />2020/9/7</time>
                <button aria-label="显示桌面" className="ml-[7px] h-10 w-3.5 border-l border-[#6f93b5] bg-gradient-to-br from-[#5c82a8] to-[#17406c]" />
            </div>
        </div>
    );
}

function Recorder() {
    return (
        <div className="absolute left-[737px] top-[933px] flex h-12 w-[447px] items-center bg-white shadow-[0_0_6px_rgba(0,0,0,0.35)]">
            <button aria-label="暂停" className="ml-3"><Svg w={34} box={34}><circle cx="17" cy="17" r="16" stroke="#111" /><path d="M14 11v12M20 11v12" strokeWidth="2.500" /></Svg></button>
            <button aria-label="停止" className="ml-3"><Svg w={34} box={34}><circle cx="17" cy="17" r="16" stroke="#111" /><rect x="11.500" y="11.500" width="11" height="11" rx="1" fill="#f8403f" stroke="none" /></Svg></button>
            <Sep className="ml-4 h-7 opacity-40" />
            <span className="ml-4 w-[70px] whitespace-nowrap text-[17px] text-[#333]">00:04:04</span>
            <Sep className="ml-4 h-7 opacity-40" />
            <svg width="9" height="20" viewBox="0 0 9 20" className="ml-[18px] shrink-0" aria-hidden="true">
                {[0, 3, 6, 9, 12, 15, 18].map((y) => [0, 3, 6].map((x) => <rect key={`${x}-${y}`} x={x} y={y} width="2" height="2" fill={y > 14 ? '#2f86c4' : '#c3d8e8'} />))}
            </svg>
            <button aria-label="音量" className="ml-[18px]"><Svg w={22} sw={2}><path d="M1 8h5l7-6v20l-7-6H1z" fill={K} stroke="none" /><path d="M16 8q3 4 0 8M19 4q6 8 0 16" /></Svg></button>
            <button aria-label="麦克风" className="ml-3.5"><Svg w={17} sw={2}><circle cx="16" cy="8" r="7.500" fill={K} stroke="none" /><path d="M9 13l2 3-9 7z" fill={K} /><path d="M11 5q3 7 8 8" stroke="#fff" strokeWidth="1.500" /></Svg></button>
            <button aria-label="摄像头" className="ml-[18px] flex items-center gap-1"><Svg w={18} sw={2.5}><circle cx="12" cy="11" r="8.500" strokeWidth="4" /><circle cx="12" cy="11" r="3" fill={K} /><path d="M5 22h14" /><path d="M6 0l16 22" stroke="#fff" /><path d="M3 1l15 22" /></Svg><svg width="5" height="5" viewBox="0 0 5 5" aria-hidden="true"><path d="M0 0h5L2.500 5z" fill="#333" /></svg></button>
            <button aria-label="画笔" className="ml-4"><Svg w={21}><path d="M19 2L7 15l3 3z" fill={K} /><path d="M6 15c-4 0-3 5-6 7 5 1 9 0 9-4z" fill={K} stroke="none" /><path d="M9 21h6c4 0 5-5 2-5s-3 6 1 6 4-2 6-2" strokeWidth="1.800" /></Svg></button>
            <button aria-label="收起" className="ml-[18px]"><Svg w={13} sw={5}><path d="M0 12h24" /></Svg></button>
        </div>
    );
}

function SpeedBall() {
    return (
        <div className="absolute right-[62px] top-[161px] size-[66px] text-[#333]">
            <svg width="66" height="66" viewBox="0 0 66 66" className="absolute inset-0" aria-hidden="true">
                <defs><radialGradient id="ball"><stop offset="0.550" stopColor="#fff" /><stop offset="1" stopColor="#b4efc6" /></radialGradient></defs>
                <circle cx="33" cy="33" r="32.500" fill="#fff" stroke="#ddd" />
                <circle cx="33" cy="33" r="28" fill="url(#ball)" stroke="#3fbf70" />
                <path d="M33 2.500A30.500 30.500 0 0144 61.500" fill="none" stroke="#3ccb6c" strokeWidth="5" />
            </svg>
            <div className="relative flex flex-col items-center pt-3">
                <span className="font-['Liberation_Sans',sans-serif] text-2xl leading-7">46<span className="text-sm">%</span></span>
                <span className="flex items-center text-[10px] leading-3">
                    <Svg w={7} sw={3}><path d="M12 23V2M5 9l7-7 7 7" stroke="#2f86c4" /></Svg>85.1K/s
                </span>
            </div>
        </div>
    );
}

export default function App() {
    return (
        <div className="relative flex h-screen flex-col overflow-hidden font-['Open_Sans','Noto_Sans_CJK_SC',sans-serif]">
            <TitleBar />
            <MenuBar />
            <Ribbon />
            <main className="flex min-h-0 flex-1">
                <div className="flex min-w-0 flex-1 flex-col">
                    <FormulaBar />
                    <div className="flex min-h-0 flex-1">
                        <Sheet />
                        <VerticalScroll />
                    </div>
                    <SheetTabs />
                </div>
                <SideBar />
            </main>
            <StatusBar />
            <TaskBar />
            <ImeBar />
            <SpeedBall />
            <Recorder />
            <span className="absolute left-[1605px] top-[493px] flex size-[52px] items-center justify-center rounded-full bg-[#a0bdb8]">
                <svg width="15" height="15" viewBox="0 0 15 15" aria-hidden="true"><path d="M5 1h5v4h4v5h-4v4H5v-4H1V5h4z" fill="#fff" stroke="#000" strokeWidth="1.500" /></svg>
            </span>
        </div>
    );
}
